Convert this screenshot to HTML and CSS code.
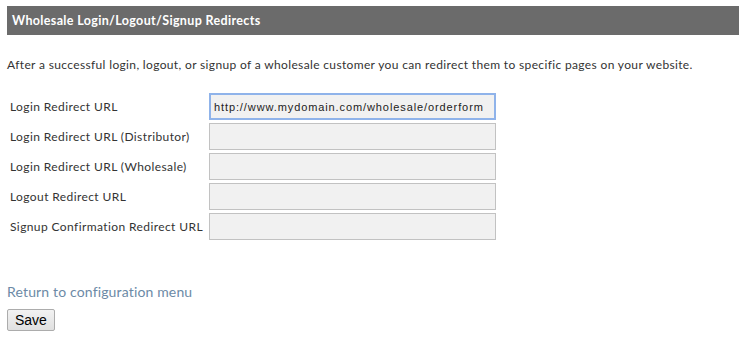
FILE: index.html
```html
<!DOCTYPE html>
<html lang="en">
<head>
  <meta charset="UTF-8">
  <title>Wholesale Login/Logout/Signup Redirects</title>
  <link rel="stylesheet" href="styles.css">
</head>
<body>
  <div class="section-title">Wholesale Login/Logout/Signup Redirects</div>
  <p class="intro">After a successful login, logout, or signup of a wholesale customer you can redirect them to specific pages on your website.</p>

  <table class="redirects">
    <tr>
      <td class="label">Login Redirect URL</td>
      <td><input type="text" class="url focused" value="http://www.mydomain.com/wholesale/orderform"></td>
    </tr>
    <tr>
      <td class="label">Login Redirect URL (Distributor)</td>
      <td><input type="text" class="url"></td>
    </tr>
    <tr>
      <td class="label">Login Redirect URL (Wholesale)</td>
      <td><input type="text" class="url"></td>
    </tr>
    <tr>
      <td class="label">Logout Redirect URL</td>
      <td><input type="text" class="url"></td>
    </tr>
    <tr>
      <td class="label">Signup Confirmation Redirect URL</td>
      <td><input type="text" class="url"></td>
    </tr>
  </table>

  <a class="back-link" href="#">Return to configuration menu</a>
  <button class="save-btn">Save</button>
</body>
</html>
```

FILE: styles.css
```css
body {
  margin: 0;
  padding: 6px 0 0 7px;
  font-family: Lato, "Open Sans", sans-serif;
  color: #333;
  background: #fff;
}
.section-title {
  background: #6b6b6b;
  color: #fff;
  font-weight: bold;
  font-size: 12.5px;
  height: 29px;
  line-height: 29px;
  padding-left: 5px;
  letter-spacing: 0.35px;
}
.intro {
  margin: 22px 0 21px;
  font-size: 12px;
  letter-spacing: 0.35px;
  color: #333;
}
.redirects {
  border-collapse: collapse;
}
.redirects td {
  padding: 0 0 3px 0;
}
.redirects .label {
  font-size: 12px;
  letter-spacing: 0.4px;
  color: #333;
  padding: 0 6px 3px 3px;
  white-space: nowrap;
}
.url {
  box-sizing: border-box;
  width: 287px;
  height: 27px;
  margin: 0;
  padding: 0 4px;
  border: 1px solid #c2c2c2;
  background: #f1f1f1;
  font-family: "Liberation Sans", Arial, sans-serif;
  font-size: 11px;
  letter-spacing: 0.9px;
  color: #222;
  outline: none;
}
.url.focused {
  border: 2px solid #8fb3ea;
  padding-left: 3px;
}
.back-link {
  display: block;
  margin-top: 40px;
  font-size: 14px;
  letter-spacing: 0.15px;
  color: #6c8aa6;
  text-decoration: none;
}
.save-btn {
  margin-top: 9px;
  font-family: "Liberation Sans", Arial, sans-serif;
  font-size: 14px;
  color: #000;
  padding: 1px 7px;
  height: 22px;
  border: 1px solid #acacac;
  border-radius: 2px;
  background: linear-gradient(#f2f2f2, #e0e0e0);
}
```
